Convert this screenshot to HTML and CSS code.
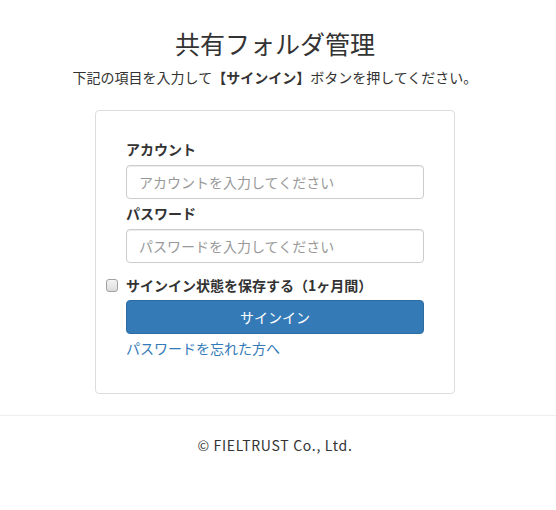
FILE: index.html
```html
<!DOCTYPE html>
<html lang="ja">
<head>
<meta charset="utf-8">
<title>共有フォルダ管理</title>
<link rel="stylesheet" href="styles.css">
</head>
<body>
<div class="page">
  <h3 class="title">共有フォルダ管理</h3>
  <p class="lead">下記の項目を入力して<b>【サインイン】</b>ボタンを押してください。</p>
  <div class="panel">
    <form class="form">
      <label class="label" for="account">アカウント</label>
      <input class="input" id="account" type="text" placeholder="アカウントを入力してください">
      <label class="label" for="password">パスワード</label>
      <input class="input" id="password" type="password" placeholder="パスワードを入力してください">
      <label class="remember"><input class="check" type="checkbox"><span>サインイン状態を保存する（1ヶ月間）</span></label>
      <button class="btn" type="button">サインイン</button>
      <a class="link" href="#">パスワードを忘れた方へ</a>
    </form>
  </div>
</div>
<hr class="rule">
<footer class="footer">© FIELTRUST Co., Ltd.</footer>
</body>
</html>
```
FILE: styles.css
```css
html, body {
  margin: 0;
  padding: 0;
  background: #fff;
}
body {
  font-family: "Noto Sans CJK JP", "Noto Sans", sans-serif;
  font-size: 14px;
  line-height: 20px;
  color: #333;
}
.page {
  width: 550px;
  display: flex;
  flex-direction: column;
  align-items: center;
}
.title {
  margin: 30px 0 0;
  font-size: 25px;
  line-height: 26px;
  font-weight: 400;
}
.lead {
  margin: 11px 0 0;
  font-size: 14px;
  line-height: 20px;
}
.lead b {
  font-weight: 700;
}
.panel {
  margin-top: 23px;
  width: 360px;
  box-sizing: border-box;
  border: 1px solid #ddd;
  border-radius: 4px;
  padding: 28px 30px 35px;
}
.form {
  display: flex;
  flex-direction: column;
}
.label {
  font-weight: 700;
  line-height: 20px;
  margin-bottom: 6px;
}
.input {
  height: 34px;
  box-sizing: border-box;
  border: 1px solid #ccc;
  border-radius: 4px;
  padding: 6px 12px;
  font-family: inherit;
  font-size: 14px;
  color: #555;
  box-shadow: inset 0 1px 1px rgba(0,0,0,.075);
  margin-bottom: 4px;
}
.input::placeholder {
  color: #999;
}
.remember {
  margin-top: 8px;
  display: flex;
  align-items: center;
  font-weight: 700;
  line-height: 20px;
}
.check {
  appearance: none;
  -webkit-appearance: none;
  width: 12px;
  height: 13px;
  margin: 0 8px 0 -20px;
  border: 1px solid #a0a0a0;
  border-radius: 3px;
  background: linear-gradient(#f4f4f4, #dcdcdc);
  box-sizing: border-box;
}
.btn {
  margin-top: 5px;
  height: 34px;
  border: 1px solid #2e6da4;
  border-radius: 4px;
  background: #337ab7;
  color: #fff;
  font-family: inherit;
  font-size: 14px;
}
.link {
  margin-top: 4px;
  color: #337ab7;
  text-decoration: none;
  line-height: 20px;
}
.rule {
  margin: 21px 0 0;
  border: 0;
  border-top: 1px solid #eee;
}
.footer {
  margin-top: 19px;
  width: 550px;
  text-align: center;
  line-height: 20px;
  letter-spacing: 0.7px;
}
```
